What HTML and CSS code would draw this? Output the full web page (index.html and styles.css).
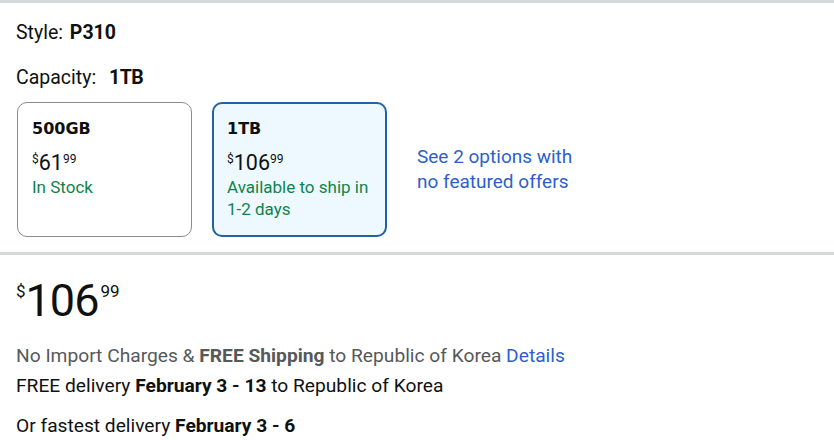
FILE: index.html
```html
<!DOCTYPE html>
<html lang="en">
<head>
<meta charset="utf-8">
<title>Product options</title>
<link rel="stylesheet" href="styles.css">
</head>
<body>
<div class="rule"></div>
<section class="variations">
  <div class="label-row">Style: <b class="style-value">P310</b></div>
  <div class="label-row cap">Capacity: <b class="cap-value">1TB</b></div>
  <div class="options">
    <div class="card">
      <div class="card-title">500GB</div>
      <div class="card-price"><span class="sup">$</span><span class="whole">61</span><span class="sup">99</span></div>
      <div class="stock">In Stock</div>
    </div>
    <div class="card selected">
      <div class="card-title">1TB</div>
      <div class="card-price"><span class="sup">$</span><span class="whole">106</span><span class="sup">99</span></div>
      <div class="stock">Available to ship in 1-2 days</div>
    </div>
    <a class="more" href="#">See 2 options with no featured offers</a>
  </div>
</section>
<div class="rule"></div>
<section class="buy">
  <div class="big-price"><span class="sup">$</span><span class="whole">106</span><span class="sup">99</span></div>
  <p class="import">No Import Charges &amp; <b>FREE Shipping</b> to Republic of Korea <a href="#">Details</a></p>
  <p class="delivery">FREE delivery <b>February 3 - 13</b> to Republic of Korea</p>
  <p class="fastest">Or fastest delivery <b>February 3 - 6</b></p>
</section>
</body>
</html>
```

FILE: styles.css
```css
body {
  margin: 0;
  font-family: Roboto, "Liberation Sans", sans-serif;
  color: #0f1111;
  background: #ffffff;
}

.rule {
  height: 3px;
  background: #d5d9d9;
}

.variations {
  padding: 18px 16px 15px;
}

.label-row {
  font-size: 19.5px;
  line-height: 24px;
}

.label-row b {
  font-weight: 700;
}

.style-value {
  margin-left: 2px;
}

.cap {
  margin-top: 21px;
}

.cap-value {
  margin-left: 8px;
  letter-spacing: -0.5px;
}

.options {
  display: flex;
  align-items: center;
  gap: 20px;
  margin-top: 12px;
  margin-left: 1px;
}

.card {
  width: 175px;
  height: 135px;
  box-sizing: border-box;
  border: 1px solid #888c8c;
  border-radius: 10px;
  padding: 16px 14px 0;
  flex: none;
}

.card.selected {
  border: 2px solid #2162a1;
  background: #edf8ff;
  padding: 15px 13px 0;
}

.card-title {
  font-family: "DejaVu Sans", sans-serif;
  font-weight: 700;
  font-size: 16px;
  line-height: 20px;
}

.card-price {
  display: flex;
  align-items: flex-start;
  margin-top: 13px;
}

.card-price .whole {
  font-size: 21.5px;
  line-height: 21px;
}

.card-price .sup {
  font-size: 12px;
  line-height: 12px;
  margin-top: 1px;
}

.stock {
  color: #10834a;
  font-size: 17px;
  line-height: 22px;
  margin-top: 3px;
}

.more {
  color: #2d5fcc;
  text-decoration: none;
  font-size: 19px;
  line-height: 24.5px;
  margin-left: 10px;
  max-width: 175px;
}

.buy {
  padding: 23px 16px 0;
}

.big-price {
  display: flex;
  align-items: flex-start;
}

.big-price .whole {
  font-size: 45px;
  line-height: 45px;
  letter-spacing: -1px;
}

.big-price .sup {
  font-size: 17px;
  line-height: 17px;
  margin-top: 5px;
}

.big-price .sup:last-child {
  margin-left: 2px;
}

.import,
.delivery,
.fastest {
  font-size: 19.2px;
  line-height: 24px;
  margin: 0;
}

.import {
  margin-top: 21px;
  color: #565959;
}

.import a {
  color: #2d5fcc;
  text-decoration: none;
}

.delivery {
  margin-top: 6px;
}

.fastest {
  margin-top: 16px;
}
```
